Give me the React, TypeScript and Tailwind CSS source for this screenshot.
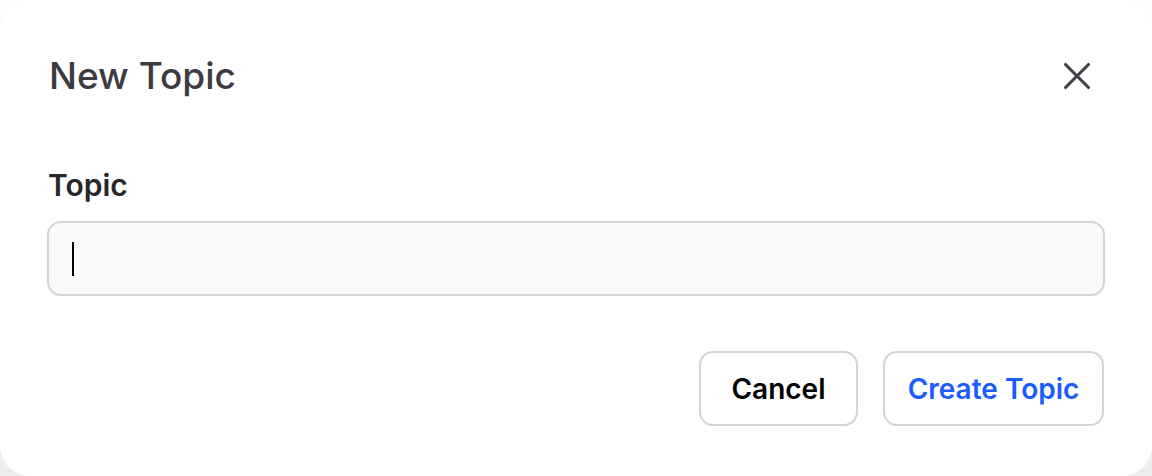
import { X } from "lucide-react";

export default function App() {
  return (
    <div
      className="h-[476px] w-[1152px] bg-gradient-to-b from-[#fdfdfd] to-[#ececec]"
      style={{ fontFamily: "Inter, 'Liberation Sans', sans-serif" }}
    >
      <div className="flex h-full flex-col rounded-[30px] bg-white px-[47px]">
        <div className="flex h-[154px] items-start justify-between pt-[52px]">
          <h2 className="pl-[2px] text-[37px] leading-[48px] font-medium text-[#3b3b41]">New Topic</h2>
          <button className="mr-[5px] mt-[1px] flex h-[46px] w-[46px] items-center justify-center text-[#3f3f46]">
            <X size={46} strokeWidth={1.6} />
          </button>
        </div>
        <label className="mt-[13px] pl-[1px] text-[30px] leading-[36px] font-semibold text-[#27272a]">Topic</label>
        <div className="mt-[18px] flex h-[75px] items-center rounded-[14px] border-2 border-[#d4d4d8] bg-[#f9f9f9] px-[23px]">
          <span className="h-[34px] w-[2px] bg-black" />
        </div>
        <div className="mt-[55px] flex justify-end gap-[25px] pr-[1px]">
          <button className="h-[75px] w-[159px] rounded-[14px] border-2 border-[#d4d4d8] bg-white text-[28px] font-semibold text-black">
            Cancel
          </button>
          <button className="h-[75px] w-[221px] rounded-[14px] border-2 border-[#d4d4d8] bg-white text-[28px] font-semibold text-[#1a5cff]">
            Create Topic
          </button>
        </div>
      </div>
    </div>
  );
}
